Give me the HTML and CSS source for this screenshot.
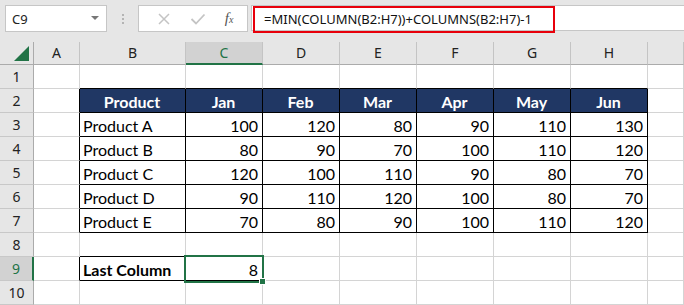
FILE: index.html
```html
<!DOCTYPE html>
<html lang="en">
<head>
    <meta charset="UTF-8">
    <meta name="viewport" content="width=device-width, initial-scale=1.0">
    <title>Last Column</title>
    <link rel="stylesheet" href="styles.css">
</head>
<body>
    <div class="bar">
        <div class="namebox">
            <span>C9</span>
            <i class="caret"></i>
        </div>
        <div class="grip"><b></b><b></b><b></b></div>
        <div class="fxbtns">
            <svg width="14" height="14" viewBox="0 0 14 14"><path d="M2 2 L12 12 M12 2 L2 12" stroke="#c4c4c4" stroke-width="1.5" fill="none"/></svg>
            <svg width="16" height="14" viewBox="0 0 16 14"><path d="M1.5 7 L6 11.5 L14.5 2.5" stroke="#c4c4c4" stroke-width="1.8" fill="none"/></svg>
            <span class="fx">f<sub>x</sub></span>
        </div>
        <div class="formula">
            <span class="hl">=MIN(COLUMN(B2:H7))+COLUMNS(B2:H7)-1</span>
        </div>
    </div>

    <div class="sheet">
        <!-- column headers -->
        <div class="h corner"><svg width="17" height="16" viewBox="0 0 17 16"><polygon points="16,0 16,15 1,15" fill="#217346"/></svg></div>
        <div class="h">A</div>
        <div class="h">B</div>
        <div class="h sel">C</div>
        <div class="h">D</div>
        <div class="h">E</div>
        <div class="h">F</div>
        <div class="h">G</div>
        <div class="h">H</div>
        <div class="h"></div>

        <!-- 1 -->
        <div class="r">1</div>
        <div class="c"></div>
        <div class="c bb"></div><div class="c bb"></div><div class="c bb"></div><div class="c bb"></div>
        <div class="c bb"></div><div class="c bb"></div><div class="c bb"></div>
        <div class="c"></div>

        <!-- 2 -->
        <div class="r">2</div>
        <div class="c br"></div>
        <div class="c t th">Product</div>
        <div class="c t th">Jan</div>
        <div class="c t th">Feb</div>
        <div class="c t th">Mar</div>
        <div class="c t th">Apr</div>
        <div class="c t th">May</div>
        <div class="c t th">Jun</div>
        <div class="c"></div>

        <!-- 3 -->
        <div class="r">3</div>
        <div class="c br"></div>
        <div class="c t">Product A</div>
        <div class="c t n">100</div><div class="c t n">120</div><div class="c t n">80</div>
        <div class="c t n">90</div><div class="c t n">110</div><div class="c t n">130</div>
        <div class="c"></div>

        <!-- 4 -->
        <div class="r">4</div>
        <div class="c br"></div>
        <div class="c t">Product B</div>
        <div class="c t n">80</div><div class="c t n">90</div><div class="c t n">70</div>
        <div class="c t n">100</div><div class="c t n">110</div><div class="c t n">120</div>
        <div class="c"></div>

        <!-- 5 -->
        <div class="r">5</div>
        <div class="c br"></div>
        <div class="c t">Product C</div>
        <div class="c t n">120</div><div class="c t n">100</div><div class="c t n">110</div>
        <div class="c t n">90</div><div class="c t n">80</div><div class="c t n">70</div>
        <div class="c"></div>

        <!-- 6 -->
        <div class="r">6</div>
        <div class="c br"></div>
        <div class="c t">Product D</div>
        <div class="c t n">90</div><div class="c t n">110</div><div class="c t n">120</div>
        <div class="c t n">100</div><div class="c t n">80</div><div class="c t n">70</div>
        <div class="c"></div>

        <!-- 7 -->
        <div class="r">7</div>
        <div class="c br"></div>
        <div class="c t">Product E</div>
        <div class="c t n">70</div><div class="c t n">80</div><div class="c t n">90</div>
        <div class="c t n">100</div><div class="c t n">110</div><div class="c t n">120</div>
        <div class="c"></div>

        <!-- 8 -->
        <div class="r">8</div>
        <div class="c"></div>
        <div class="c bb"></div><div class="c bb"></div><div class="c"></div><div class="c"></div>
        <div class="c"></div><div class="c"></div><div class="c"></div>
        <div class="c"></div>

        <!-- 9 -->
        <div class="r sel">9</div>
        <div class="c br"></div>
        <div class="c t bold">Last Column</div>
        <div class="c t n active">8</div>
        <div class="c"></div><div class="c"></div><div class="c"></div><div class="c"></div><div class="c"></div>
        <div class="c"></div>

        <!-- 10 -->
        <div class="r">10</div>
        <div class="c"></div><div class="c"></div><div class="c"></div><div class="c"></div><div class="c"></div>
        <div class="c"></div><div class="c"></div><div class="c"></div><div class="c"></div>
    </div>
</body>
</html>
```

FILE: styles.css
```css
* { margin: 0; padding: 0; box-sizing: border-box; }
body {
    background: #fff;
    font-family: Lato, "Liberation Sans", sans-serif;
    overflow: hidden;
}

/* formula bar */
.bar {
    height: 42px;
    background: #e6e6e6;
    display: flex;
    align-items: flex-start;
    padding-top: 5px;
}
.bar .namebox {
    margin-left: 5px;
    width: 102px;
    height: 27px;
    background: #fff;
    border: 1px solid #c6c6c6;
    display: flex;
    align-items: center;
    justify-content: space-between;
    padding: 0 7px 0 6px;
    font-family: "Noto Sans", sans-serif;
    font-size: 13px;
    color: #222;
}
.bar .caret {
    width: 0;
    height: 0;
    border-left: 4px solid transparent;
    border-right: 4px solid transparent;
    border-top: 4px solid #777;
    margin-top: -2px;
}
.bar .grip {
    width: 31px;
    height: 27px;
    display: flex;
    flex-direction: column;
    align-items: center;
    justify-content: center;
    gap: 2px;
}
.bar .grip b {
    width: 2px;
    height: 2px;
    background: #b4b4b4;
}
.bar .fxbtns {
    width: 110px;
    height: 27px;
    background: #fff;
    border: 1px solid #c6c6c6;
    display: flex;
    align-items: center;
    justify-content: space-around;
    padding: 0 4px 0 8px;
}
.bar .fx {
    font-family: "Liberation Serif", serif;
    font-style: italic;
    font-size: 15px;
    color: #555;
}
.bar .fx sub {
    font-size: 10px;
    vertical-align: 0;
}
.bar .formula {
    flex: 1;
    margin-left: 3px;
    height: 26px;
    background: #fff;
    border: 1px solid #c6c6c6;
    border-right: 0;
    padding-left: 1px;
}
.bar .hl {
    display: inline-block;
    width: 302px;
    height: 27px;
    margin-top: 0px;
    border: 2px solid #e8000b;
    padding-left: 9px;
    line-height: 23px;
    font-family: "Noto Sans", sans-serif;
    font-size: 13px;
    color: #111;
    white-space: nowrap;
}

/* grid */
.sheet {
    display: grid;
    grid-template-columns: 34px 46px 106px repeat(6, 77px) 1fr;
    grid-template-rows: 23px repeat(10, 24px);
    font-size: 16px;
    color: #000;
}
.sheet .c {
    border-right: 1px solid #d4d4d4;
    border-bottom: 1px solid #d4d4d4;
    padding: 2px 4px 0 3px;
    line-height: 21px;
    white-space: nowrap;
}
.sheet .h {
    background: #e6e6e6;
    border-right: 1px solid #c4c4c4;
    border-bottom: 1px solid #ababab;
    text-align: center;
    font-family: "Noto Sans", sans-serif;
    font-size: 14px;
    line-height: 22px;
    color: #222;
}
.sheet .h.corner {
    border-right: 1px solid #ababab;
    display: flex;
    justify-content: flex-end;
    align-items: flex-end;
    padding: 0 3px 2px 0;
}
.sheet .h.sel {
    background: #d2d2d2;
    color: #217346;
    border-bottom: 2px solid #217346;
}
.sheet .r {
    background: #e6e6e6;
    border-right: 1px solid #ababab;
    border-bottom: 1px solid #c8c8c8;
    text-align: center;
    font-family: "Noto Sans", sans-serif;
    font-size: 14px;
    line-height: 24px;
    color: #222;
}
.sheet .r.sel {
    background: #d2d2d2;
    color: #217346;
    border-right: 2px solid #217346;
}

.sheet .t { border-color: #000; }
.sheet .th {
    background: #203764;
    color: #fff;
    font-weight: bold;
    text-align: center;
}
.sheet .n { text-align: right; }
.sheet .bold { font-weight: bold; }
.sheet .br { border-right-color: #000; }
.sheet .bb { border-bottom-color: #000; }

/* active cell */
.sheet .active { position: relative; }
.sheet .active::after {
    content: "";
    position: absolute;
    left: -2px;
    top: -2px;
    right: -2px;
    bottom: -3px;
    border: 2px solid #217346;
}
.sheet .active::before {
    content: "";
    position: absolute;
    right: -4px;
    bottom: -5px;
    width: 5px;
    height: 5px;
    background: #217346;
    border: 1px solid #fff;
    z-index: 1;
}
```
